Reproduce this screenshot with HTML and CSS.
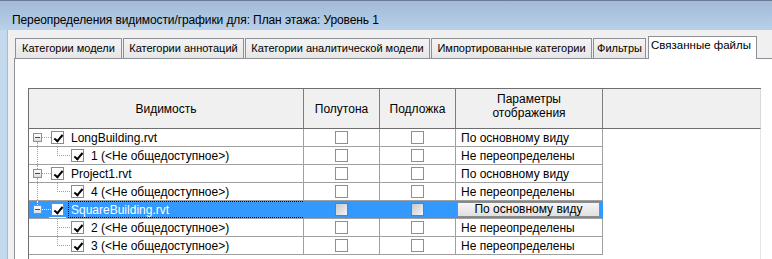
FILE: index.html
```html
<!doctype html>
<html>
<head>
<meta charset="utf-8">
<title>Переопределения видимости/графики</title>
<link rel="stylesheet" href="styles.css">
</head>
<body>
	<div class="window">
		<div class="caption">Переопределения видимости/графики для: План этажа: Уровень 1</div>
		<div class="client">
			<ul class="tabs">
				<li>Категории модели</li>
				<li>Категории аннотаций</li>
				<li>Категории аналитической модели</li>
				<li>Импортированные категории</li>
				<li>Фильтры</li>
				<li class="on">Связанные файлы</li>
			</ul>
			<div class="panel">
				<div class="grid">
					<div class="hd">Видимость</div>
					<div class="hd">Полутона</div>
					<div class="hd">Подложка</div>
					<div class="hd two">Параметры<br>отображения</div>
					<div class="hd blank"></div>

					<!-- LongBuilding -->
					<div class="row">
						<div class="tree">
							<span class="vl bot"></span>
							<span class="exp"></span><span class="hl"></span>
							<span class="chk on"></span>
							<span class="label">LongBuilding.rvt</span>
						</div>
						<div class="c"><span class="box"></span></div>
						<div class="c"><span class="box"></span></div>
						<div class="txt">По основному виду</div>
						<div class="blank"></div>
					</div>
					<div class="row">
						<div class="tree child">
							<span class="vl full"></span>
							<span class="vl2 end"></span><span class="hl2"></span>
							<span class="chk on"></span>
							<span class="label">1 (&lt;Не общедоступное&gt;)</span>
						</div>
						<div class="c"><span class="box"></span></div>
						<div class="c"><span class="box"></span></div>
						<div class="txt">Не переопределены</div>
						<div class="blank"></div>
					</div>

					<!-- Project1 -->
					<div class="row">
						<div class="tree">
							<span class="vl top"></span><span class="vl bot"></span>
							<span class="exp"></span><span class="hl"></span>
							<span class="chk on"></span>
							<span class="label">Project1.rvt</span>
						</div>
						<div class="c"><span class="box"></span></div>
						<div class="c"><span class="box"></span></div>
						<div class="txt">По основному виду</div>
						<div class="blank"></div>
					</div>
					<div class="row">
						<div class="tree child">
							<span class="vl full"></span>
							<span class="vl2 end"></span><span class="hl2"></span>
							<span class="chk on"></span>
							<span class="label">4 (&lt;Не общедоступное&gt;)</span>
						</div>
						<div class="c"><span class="box"></span></div>
						<div class="c"><span class="box"></span></div>
						<div class="txt">Не переопределены</div>
						<div class="blank"></div>
					</div>

					<!-- SquareBuilding (selected) -->
					<div class="row sel">
						<div class="tree">
							<span class="vl top"></span>
							<span class="exp"></span><span class="hl"></span>
							<span class="chk on"></span>
							<span class="label">SquareBuilding.rvt</span>
						</div>
						<div class="c"><span class="box off"></span></div>
						<div class="c"><span class="box off"></span></div>
						<div class="txt"><span class="btn">По основному виду</span></div>
						<div class="blank"></div>
					</div>
					<div class="row">
						<div class="tree child">
							<span class="vl2 full"></span><span class="hl2"></span>
							<span class="chk on"></span>
							<span class="label">2 (&lt;Не общедоступное&gt;)</span>
						</div>
						<div class="c"><span class="box"></span></div>
						<div class="c"><span class="box"></span></div>
						<div class="txt">Не переопределены</div>
						<div class="blank"></div>
					</div>
					<div class="row">
						<div class="tree child">
							<span class="vl2 end"></span><span class="hl2"></span>
							<span class="chk on"></span>
							<span class="label">3 (&lt;Не общедоступное&gt;)</span>
						</div>
						<div class="c"><span class="box"></span></div>
						<div class="c"><span class="box"></span></div>
						<div class="txt">Не переопределены</div>
						<div class="blank"></div>
					</div>

					<div class="fill"></div>
				</div>
			</div>
		</div>
	</div>
</body>
</html>
```

FILE: styles.css
```css
*{
	margin: 0;
	padding: 0;
	box-sizing: border-box;
	list-style: none;
}
html,body{
	height: 100%;
	overflow: hidden;
}
body{
	background: #c5d9ee;
	font-family: "Liberation Sans", Arial, sans-serif;
	font-size: 12px;
	color: #000;
}
.window{
	height: 100%;
	display: flex;
	flex-direction: column;
}

/* заголовок окна */
.caption{
	height: 30px;
	padding: 8px 0 0 12px;
	line-height: 22px;
	letter-spacing: -0.1px;
	white-space: nowrap;
	border-top: 1px solid #6b7c92;
	background: linear-gradient(#a2bad7, #b9d0e9);
}

.client{
	flex: 1;
	display: flex;
	flex-direction: column;
	margin-left: 7px;
	border-left: 1px solid #a9bbcf;
	background: #f0f0f0;
	padding: 6px 0 0 6px;
}

/* вкладки */
.tabs{
	display: flex;
	align-items: flex-end;
	height: 22px;
	margin-left: 1px;
	position: relative;
	z-index: 1;
}
.tabs li{
	height: 20px;
	margin-right: 1px;
	border: 1px solid #8d9097;
	border-bottom: 0;
	background: linear-gradient(#f4f4f4, #e6e6e6);
	font-size: 11px;
	line-height: 19px;
	text-align: center;
	white-space: nowrap;
}
.tabs li:nth-child(1){ width: 107px; }
.tabs li:nth-child(2){ width: 121px; }
.tabs li:nth-child(3){ width: 185px; }
.tabs li:nth-child(4){ width: 161px; }
.tabs li:nth-child(5){ width: 53px; }
.tabs .on{
	width: 109px;
	height: 23px;
	margin: 0 0 -1px 1px;
	padding-right: 3px;
	background: #fff;
	line-height: 17px;
	font-size: 11.5px;
}

.panel{
	flex: 1;
	background: #fff;
	border-top: 1px solid #8d9097;
	border-left: 1px solid #8d9097;
	padding: 29px 0 0 13px;
}

/* таблица */
.grid{
	display: grid;
	grid-template-columns: 275px 76px 76px 147px 158px;
	width: max-content;
	height: 100%;
	grid-template-rows: 40px repeat(7, 18px) 1fr;
	border-top: 1px solid #6e6e6e;
	border-left: 1px solid #6e6e6e;
}
.hd{
	height: 40px;
	display: flex;
	align-items: center;
	justify-content: center;
	text-align: center;
	line-height: 14px;
	background: #f0f0f0;
	border-right: 1px solid #7d7d7d;
	border-bottom: 1px solid #6e6e6e;
}
.hd.two{
	padding-bottom: 5px;
}
.hd.blank{
	border-right-color: #d9d9d9;
}

.row{
	display: contents;
}
.row > div{
	height: 18px;
	display: flex;
	align-items: center;
	border-right: 1px solid #a0a0a0;
	border-bottom: 1px solid #a0a0a0;
	white-space: nowrap;
}
.row > .blank{
	border-bottom: 0;
	border-right-color: #e3e3e3;
}
.row > .c{
	justify-content: center;
}
.row > .txt{
	padding-left: 5px;
}
.fill{
	grid-column: 1 / -1;
	border-right: 1px solid #e3e3e3;
}

/* дерево */
.tree{
	position: relative;
	padding-left: 4px;
}
.tree.child{
	padding-left: 42px;
}
.exp{
	width: 9px;
	height: 9px;
	border: 1px solid #919191;
	background: linear-gradient(#fff, #dcdcdc);
	position: relative;
}
.exp:after{
	content: "";
	position: absolute;
	left: 1px;
	top: 3px;
	width: 5px;
	height: 1px;
	background: #3c4a66;
}
.hl{
	width: 9px;
	border-top: 1px dotted #a0a0a0;
}
.vl, .vl2{
	position: absolute;
	width: 0;
	border-left: 1px dotted #a0a0a0;
}
.vl{
	left: 8px;
}
.vl.top{
	top: 0;
	height: 4px;
}
.vl.bot{
	top: 13px;
	height: 4px;
}
.vl.full, .vl2.full{
	top: 0;
	height: 17px;
}
.vl2{
	left: 28px;
}
.vl2.end{
	top: 0;
	height: 9px;
}
.hl2{
	position: absolute;
	left: 28px;
	top: 8px;
	width: 13px;
	border-top: 1px dotted #a0a0a0;
}

.chk{
	width: 13px;
	height: 13px;
	border: 1px solid #8a8a8a;
	background: #fff;
	position: relative;
}
.chk.on:after{
	content: "";
	position: absolute;
	left: 4px;
	top: 1px;
	width: 3px;
	height: 7px;
	border: solid #000;
	border-width: 0 2px 2px 0;
	transform: rotate(40deg);
}
.label{
	align-self: stretch;
	flex: 1;
	display: flex;
	align-items: center;
	margin-left: 4px;
	padding-left: 2px;
	border: 1px solid transparent;
	border-right: 0;
}

.box{
	width: 13px;
	height: 13px;
	border: 1px solid #8f8f8f;
	background: #fff;
}
.box.off{
	border-color: #7a7a7a;
	background: linear-gradient(135deg, #c6c6c6, #f6f6f6);
}

/* выделенная строка */
.sel > div{
	background: #3399ff;
	border-right-color: #3399ff;
}
.sel > div.blank{
	background: #fff;
	border-right-color: #e3e3e3;
}
.sel .label{
	color: #fff;
	border: 1px dotted #000;
	border-right: 0;
}
.sel .hl, .sel .vl{
	border-color: #fff;
}
.sel .chk:before{
	content: "";
	position: absolute;
	left: -3px;
	top: 13px;
	width: 17px;
	height: 1px;
	background: #fff;
}
.btn{
	flex: 1;
	height: 15px;
	margin: 0 2px 0 -4px;
	border: 1px solid #8b8b8b;
	background: linear-gradient(#f6f6f6, #e0e0e0);
	text-align: center;
	line-height: 13px;
}
```
